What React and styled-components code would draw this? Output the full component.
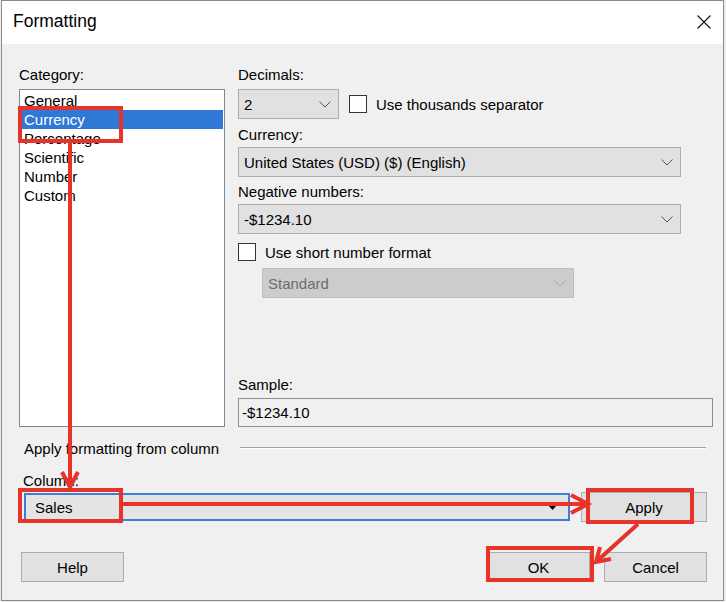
import React from "react";
import styled, { createGlobalStyle } from "styled-components";

const Global = createGlobalStyle`
  html, body { margin: 0; padding: 0; background: #ececec; }
  * { box-sizing: border-box; }
`;

const Page = styled.div`
  position: relative;
  width: 726px;
  height: 602px;
  font-family: "Liberation Sans", Arial, sans-serif;
  font-size: 15px;
  color: #000;
`;

const Window = styled.div`
  margin-left: 1px;
  width: 723px;
  height: 601px;
  border: 1px solid #8a8a8a;
  background: #f0f0f0;
  display: flex;
  flex-direction: column;
`;

const TitleBar = styled.div`
  height: 43px;
  flex-shrink: 0;
  background: #fff;
  display: flex;
  align-items: center;
  justify-content: space-between;
  padding: 0 12px 2px 11px;
  font-size: 17.5px;
`;

const Body = styled.div`
  flex: 1;
  padding: 22px 10px 0 17px;
  display: flex;
  flex-direction: column;
`;

const Top = styled.div`
  display: flex;
  gap: 13px;
`;

const LeftCol = styled.div`
  width: 206px;
  display: flex;
  flex-direction: column;
`;

const RightCol = styled.div`
  flex: 1;
  display: flex;
  flex-direction: column;
`;

const Label = styled.div`
  height: 18px;
  line-height: 18px;
  white-space: nowrap;
  margin-top: ${(p) => p.$mt || 0}px;
  padding-left: ${(p) => p.$pl || 0}px;
`;

const List = styled.div`
  margin-top: 5px;
  height: 338px;
  background: #fff;
  border: 1px solid #828790;
  padding-top: 1px;
`;

const Item = styled.div`
  height: 19px;
  line-height: 19px;
  margin: 0 1px;
  padding-left: 3px;
  background: ${(p) => (p.$selected ? "#2f78d5" : "transparent")};
  color: ${(p) => (p.$selected ? "#fff" : "#000")};
`;

const Row = styled.div`
  display: flex;
  align-items: center;
  margin-top: ${(p) => p.$mt || 0}px;
`;

const Select = styled.div`
  width: ${(p) => p.$w}px;
  height: 30px;
  margin-top: ${(p) => p.$mt || 0}px;
  margin-left: ${(p) => p.$ml || 0}px;
  flex-shrink: 0;
  display: flex;
  align-items: center;
  justify-content: space-between;
  padding: 0 7px 0 5px;
  background: ${(p) => (p.$disabled ? "#cccccc" : "#e1e1e1")};
  border: 1px solid ${(p) => (p.$disabled ? "#bfbfbf" : "#adadad")};
  color: ${(p) => (p.$disabled ? "#6d6d6d" : "#000")};
`;

const Check = styled.span`
  width: 18px;
  height: 18px;
  flex-shrink: 0;
  background: #fff;
  border: 1px solid #333;
  margin-left: ${(p) => p.$ml || 0}px;
  margin-right: 9px;
`;

const SampleLabel = styled(Label)`
  margin-top: auto;
`;

const SampleBox = styled.div`
  margin-top: 4px;
  height: 29px;
  border: 1px solid #8f8f8f;
  background: #f0f0f0;
  display: flex;
  align-items: center;
  padding-left: 3px;
`;

const Section = styled.div`
  margin-top: 12px;
  height: 18px;
  display: flex;
  align-items: center;
`;

const SectionText = styled.div`
  width: 221px;
  padding-left: 5px;
  white-space: nowrap;
`;

const Rule = styled.div`
  flex: 1;
  margin-right: 7px;
  border-top: 1px solid #a0a0a0;
  border-bottom: 1px solid #fff;
`;

const Combo = styled.div`
  margin-left: 5px;
  width: 546px;
  height: 28px;
  border: 2px solid #3a7fd8;
  background: #e4e4e4;
  display: flex;
  align-items: center;
  justify-content: space-between;
  padding: 0 11px 0 9px;
`;

const Button = styled.div`
  width: ${(p) => p.$w || 103}px;
  height: 30px;
  flex-shrink: 0;
  background: #e1e1e1;
  border: 1px solid #adadad;
  display: flex;
  align-items: center;
  justify-content: center;
  margin-left: ${(p) => p.$ml || "0"};
  margin-right: ${(p) => p.$mr || 0}px;
`;

const Overlay = styled.svg`
  position: absolute;
  left: 0;
  top: 0;
  pointer-events: none;
`;

const Chevron = ({ color = "#555" }) => (
  <svg width="12" height="7" viewBox="0 0 12 7">
    <path d="M0.5 0.5 L6 6 L11.5 0.5" fill="none" stroke={color} strokeWidth="1" />
  </svg>
);

const RED = "#e8332a";

export default function App() {
  return (
    <Page>
      <Global />
      <Window>
        <TitleBar>
          <span>Formatting</span>
          <svg width="14" height="14" viewBox="0 0 14 14">
            <path d="M0.5 0.5 L13.5 13.5 M13.5 0.5 L0.5 13.5" stroke="#111" strokeWidth="1.1" />
          </svg>
        </TitleBar>
        <Body>
          <Top>
            <LeftCol>
              <Label>Category:</Label>
              <List>
                <Item>General</Item>
                <Item $selected>Currency</Item>
                <Item>Percentage</Item>
                <Item>Scientific</Item>
                <Item>Number</Item>
                <Item>Custom</Item>
              </List>
            </LeftCol>
            <RightCol>
              <Label>Decimals:</Label>
              <Row $mt={5}>
                <Select $w={101}>
                  <span>2</span>
                  <Chevron />
                </Select>
                <Check $ml={10} />
                <span>Use thousands separator</span>
              </Row>
              <Label $mt={7}>Currency:</Label>
              <Select $w={443} $mt={3}>
                <span>United States (USD) ($) (English)</span>
                <Chevron />
              </Select>
              <Label $mt={6}>Negative numbers:</Label>
              <Select $w={443} $mt={3}>
                <span>-$1234.10</span>
                <Chevron />
              </Select>
              <Row $mt={9}>
                <Check />
                <span>Use short number format</span>
              </Row>
              <Select $w={312} $ml={24} $mt={7} $disabled>
                <span>Standard</span>
                <Chevron color="#aaa" />
              </Select>
              <SampleLabel>Sample:</SampleLabel>
              <SampleBox>-$1234.10</SampleBox>
            </RightCol>
          </Top>
          <Section>
            <SectionText>Apply formatting from column</SectionText>
            <Rule />
          </Section>
          <Label $mt={15} $pl={4}>Column:</Label>
          <Row $mt={2}>
            <Combo>
              <span>Sales</span>
              <svg width="9" height="5" viewBox="0 0 9 5">
                <path d="M0 0 L9 0 L4.5 5 Z" fill="#000" />
              </svg>
            </Combo>
            <Button $w={126} $ml="auto" $mr={6}>Apply</Button>
          </Row>
          <Row $mt={30}>
            <Button $ml="2px">Help</Button>
            <Button $ml="auto">OK</Button>
            <Button $ml="14px" $mr={6}>Cancel</Button>
          </Row>
        </Body>
      </Window>
      <Overlay width="726" height="602" viewBox="0 0 726 602">
        <g fill="none" stroke={RED} strokeWidth="4">
          <rect x="20" y="108" width="101" height="33" />
          <rect x="20" y="490" width="101" height="31" />
          <rect x="588" y="490" width="104" height="32" />
          <rect x="488" y="548" width="104" height="32" />
          <path d="M70 143 L70 486" />
          <path d="M62 472 L70 487 L78 472" strokeLinejoin="miter" />
          <path d="M123 504 L587 504" />
          <path d="M571 495 L588 504 L571 513" />
          <path d="M638 524 L597 561" />
          <path d="M600 547 L596 562 L611 559" />
        </g>
      </Overlay>
    </Page>
  );
}
